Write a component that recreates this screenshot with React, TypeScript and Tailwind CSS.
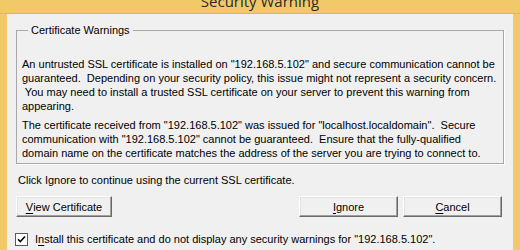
import React from "react";

const body = "font-['Liberation_Sans',Arial,sans-serif] text-[11px] leading-[14px] text-black";

const Mnemonic: React.FC<{ text: string; at: number }> = ({ text, at }) => (
  <>
    {text.slice(0, at)}
    <span className="underline underline-offset-[2px]">{text[at]}</span>
    {text.slice(at + 1)}
  </>
);

const Button: React.FC<{ children: React.ReactNode; width: string }> = ({ children, width }) => (
  <button
    className={`${width} h-[21px] bg-[#f0f0f0] border border-t-white border-l-white border-r-[#696969] border-b-[#696969] shadow-[inset_-1px_-1px_0_#a0a0a0,inset_1px_1px_0_#e3e3e3] ${body} flex items-center justify-center`}
  >
    {children}
  </button>
);

export default function App() {
  return (
    <div className="w-[520px] h-[250px] overflow-hidden bg-[#f1c968] flex flex-col">
      {/* title bar, top half cut off in the shot */}
      <div className="h-[14px] shrink-0 flex justify-center overflow-hidden border-b border-[#e2b857]">
        <span className="mt-[-6px] font-['Open_Sans',sans-serif] text-[15px] leading-[15px] text-[#2b2b2b]">
          Security Warning
        </span>
      </div>

      <div className="flex-1 mx-[7px] bg-[#f0f0f0] pt-[9px] flex flex-col">
        <fieldset className="mx-[9px] border border-[#a8a8a8] shadow-[1px_1px_0_#fff] pl-[5px] pr-[4px] pt-[20px] pb-[3px]">
          <legend className={`ml-[6px] px-[3px] ${body}`}>Certificate Warnings</legend>
          <p className={`${body} whitespace-pre`}>
            An untrusted SSL certificate is installed on "192.168.5.102" and secure communication cannot be{"\n"}
            guaranteed.  Depending on your security policy, this issue might not represent a security concern.{"\n"}
            {" "}You may need to install a trusted SSL certificate on your server to prevent this warning from{"\n"}
            appearing.
          </p>
          <p className={`${body} whitespace-pre mt-[5px]`}>
            The certificate received from "192.168.5.102" was issued for "localhost.localdomain".  Secure{"\n"}
            communication with "192.168.5.102" cannot be guaranteed.  Ensure that the fully-qualified{"\n"}
            domain name on the certificate matches the address of the server you are trying to connect to.
          </p>
        </fieldset>

        <p className={`${body} ml-[11px] mt-[9px]`}>
          Click Ignore to continue using the current SSL certificate.
        </p>

        <div className="mt-[9px] pl-[9px] pr-[11px] flex items-center">
          <Button width="w-[96px]">
            <Mnemonic text="View Certificate" at={0} />
          </Button>
          <div className="flex-1" />
          <div className="flex gap-[5px]">
            <Button width="w-[99px]">
              <Mnemonic text="Ignore" at={0} />
            </Button>
            <Button width="w-[99px]">
              <Mnemonic text="Cancel" at={0} />
            </Button>
          </div>
        </div>

        <label className="mt-[15px] ml-[8px] flex items-center gap-[7px]">
          <span className="w-[13px] h-[13px] bg-white border border-[#5a5a5a] flex items-center justify-center">
            <svg width="9" height="9" viewBox="0 0 9 9">
              <path d="M1 4.2 L3.3 6.6 L8 1.6" fill="none" stroke="#000" strokeWidth="1.5" />
            </svg>
          </span>
          <span className={body}>
            I<span className="underline underline-offset-[2px]">n</span>stall this certificate and do not display any security warnings for "192.168.5.102".
          </span>
        </label>
      </div>
    </div>
  );
}
